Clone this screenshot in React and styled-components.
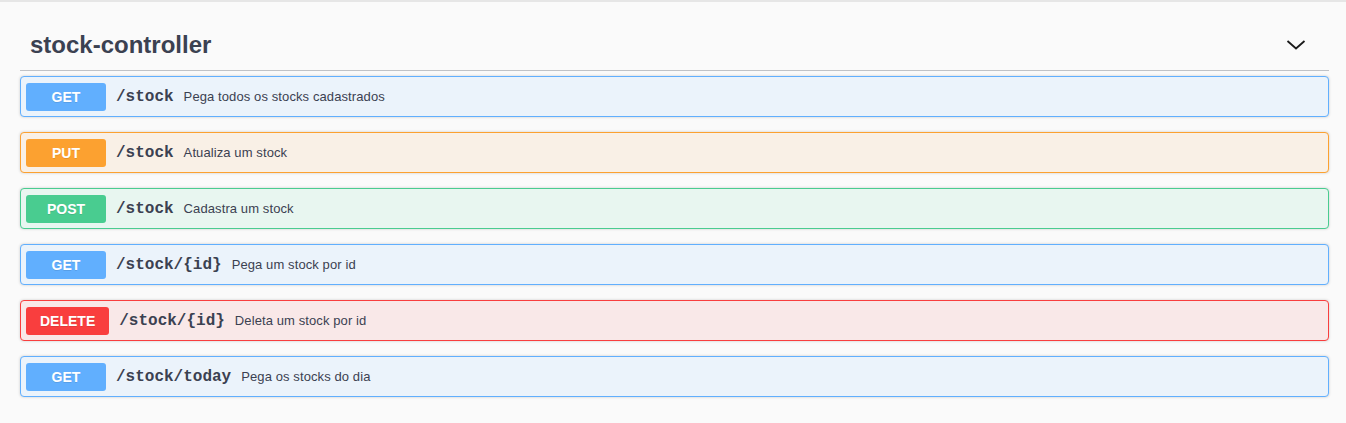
import styled, { createGlobalStyle } from 'styled-components';

const GlobalStyle = createGlobalStyle`
    * { box-sizing: border-box; }
    body {
        margin: 0;
        background: #fafafa;
        font-family: 'Liberation Sans', Arial, sans-serif;
        color: #3b4151;
    }
`;

const METHODS = {
    get: { color: '#61affe', bg: '#ebf3fb' },
    put: { color: '#fca130', bg: '#f9f0e6' },
    post: { color: '#49cc90', bg: '#e8f6f0' },
    delete: { color: '#f93e3e', bg: '#f9e8e8' },
};

const operations = [
    { method: 'get', path: '/stock', summary: 'Pega todos os stocks cadastrados' },
    { method: 'put', path: '/stock', summary: 'Atualiza um stock' },
    { method: 'post', path: '/stock', summary: 'Cadastra um stock' },
    { method: 'get', path: '/stock/{id}', summary: 'Pega um stock por id' },
    { method: 'delete', path: '/stock/{id}', summary: 'Deleta um stock por id' },
    { method: 'get', path: '/stock/today', summary: 'Pega os stocks do dia' },
];

const Chevron = () => (
    <svg width="20" height="20" viewBox="0 0 20 20">
        <path d="M1.5 6 L10 13.5 L18.5 6" fill="none" stroke="#1a1a1a" strokeWidth="1.8" />
    </svg>
);

const Opblock = ({ method, path, summary }) => (
    <OpblockLayout $method={method}>
        <MethodBadge $method={method}>{method.toUpperCase()}</MethodBadge>
        <Path>{path}</Path>
        <Summary>{summary}</Summary>
    </OpblockLayout>
);

const App = () => (
    <>
        <GlobalStyle />
        <Page>
            <TagSection>
                <TagHeader>
                    <span>stock-controller</span>
                    <ExpandButton>
                        <Chevron />
                    </ExpandButton>
                </TagHeader>
                {operations.map((op, i) => (
                    <Opblock key={i} {...op} />
                ))}
            </TagSection>
        </Page>
    </>
);

export default App;

const Page = styled.div`
    border-top: 2px solid #e6e6e6;
    padding: 18px 17px 0 20px;
    min-height: 423px;
`;

const TagSection = styled.div`
    display: flex;
    flex-direction: column;
`;

const TagHeader = styled.h3`
    display: flex;
    align-items: center;
    justify-content: space-between;
    margin: 0 0 5px;
    height: 51px;
    padding: 0 23px 0 10px;
    font-size: 24px;
    font-weight: 700;
    color: #3b4151;
    border-bottom: 1px solid rgba(59, 65, 81, 0.3);
`;

const ExpandButton = styled.button`
    display: flex;
    padding: 0;
    border: none;
    background: none;
    cursor: pointer;
`;

const OpblockLayout = styled.div`
    display: flex;
    align-items: center;
    height: 41px;
    margin-bottom: 15px;
    padding: 5px;
    border: 1px solid ${({ $method }) => METHODS[$method].color};
    border-radius: 4px;
    background: ${({ $method }) => METHODS[$method].bg};
    box-shadow: 0 0 3px rgba(0, 0, 0, 0.19);
`;

const MethodBadge = styled.span`
    min-width: 80px;
    padding: 6px 14px;
    border-radius: 3px;
    background: ${({ $method }) => METHODS[$method].color};
    color: #fff;
    font-size: 14px;
    line-height: 16px;
    font-weight: 700;
    text-align: center;
    text-shadow: 0 1px 0 rgba(0, 0, 0, 0.1);
`;

const Path = styled.span`
    padding: 0 10px;
    font-family: 'Liberation Mono', 'Courier New', monospace;
    font-size: 16px;
    font-weight: 700;
    color: #3b4151;
`;

const Summary = styled.span`
    font-size: 13px;
    letter-spacing: 0.1px;
    color: #3b4151;
`;
